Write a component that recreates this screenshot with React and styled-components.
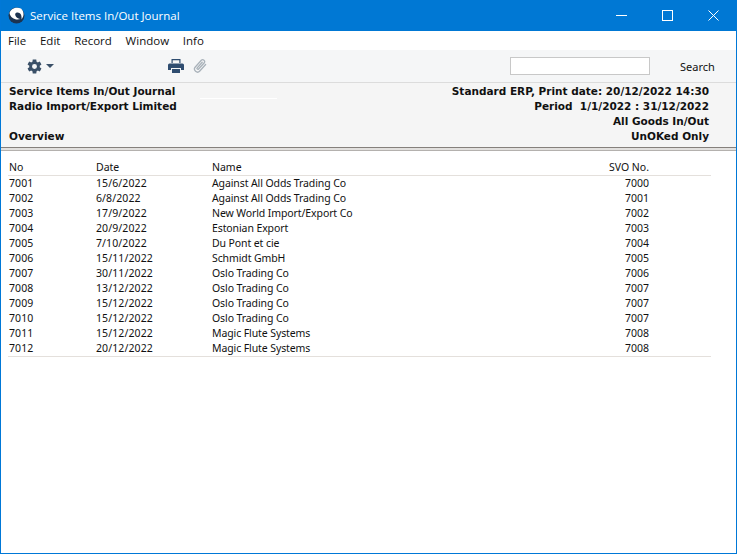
import React from 'react';
import styled, { createGlobalStyle } from 'styled-components';

const Global = createGlobalStyle`
  html, body { margin: 0; padding: 0; background: #fff; }
  #root { width: 737px; height: 554px; }
`;
const Win = styled.div`
  width: 737px; height: 554px; box-sizing: border-box;
  border: 1px solid #0078d7; border-top: 0; background: #fff;
  display: flex; flex-direction: column; overflow: hidden;
  font-family: "Noto Sans", "Open Sans", sans-serif; color: #111;
`;
const TitleBar = styled.div`
  height: 31px; flex: none; background: #0078d4; color: #fff; margin: 0 -1px;
  display: flex; align-items: center; padding: 0 1px 0 8px;
  font-family: "Open Sans", sans-serif; font-size: 11.5px;
`;
const TitleText = styled.span` margin-left: 5px; flex: 1; `;
const WinBtn = styled.div`
  width: 46px; height: 31px; display: flex; align-items: center; justify-content: center;
`;
const MenuBar = styled.div`
  height: 19px; flex: none; display: flex; align-items: center; gap: 13.75px; padding-left: 7px;
  font-family: "Open Sans", sans-serif; font-size: 11.5px;
`;
const Toolbar = styled.div`
  height: 33px; flex: none; box-sizing: border-box; background: #f5f6f7; border-bottom: 1px solid #dcdcdc;
  display: flex; align-items: center; padding-left: 25px;
`;
const Caret = styled.div`
  width: 0; height: 0; margin-left: 3px; border-left: 4px solid transparent; border-right: 4px solid transparent;
  border-top: 4px solid #3a5068;
`;
const PrintSlot = styled.div` margin-left: 114px; display: flex; gap: 9px; align-items: center; `;
const SearchInput = styled.div`
  margin-left: auto; width: 138px; height: 16px; background: #fff; border: 1px solid #c8c8c8;
`;
const SearchLabel = styled.div`
  width: 86px; box-sizing: border-box; padding-left: 30px; font-size: 11px;
`;
const ReportHead = styled.div`
  position: relative; height: 64px; flex: none; box-sizing: border-box; background: #f5f5f5; padding: 1px 27px 0 8px;
  display: flex; justify-content: space-between;
  font-family: "DejaVu Sans", sans-serif; font-weight: 700; font-size: 10.5px; line-height: 15px;
`;
const FaintMark = styled.div`
  position: absolute; left: 199px; top: 15px; width: 77px; height: 1px; background: #fff;
`;
const Col = styled.div` display: flex; flex-direction: column; align-items: ${p => p.$right ? 'flex-end' : 'flex-start'}; `;
const Line = styled.div` height: 15px; white-space: pre; `;
const Rule = styled.div`
  height: 4px; flex: none; box-sizing: border-box; background: #e2e0de;
  border-top: 1px solid #85807c; border-bottom: 1px solid #b4b1ae;
`;
const Table = styled.div`
  margin: 8px 25px 0 7px; font-size: 10.5px;
`;
const Grid = `display: grid; grid-template-columns: 87px 116px 1fr 60px 62px;`;
const HeadRow = styled.div`
  ${Grid} height: 17px; line-height: 16px; border-bottom: 1px solid #e4e0dc; padding-left: 1px; box-sizing: border-box;
`;
const Row = styled.div`
  ${Grid} height: 15px; line-height: 15px; padding-left: 1px;
`;
const Cell = styled.div` letter-spacing: 0.1px; `;
const NameCell = styled.div` letter-spacing: -0.1px; `;
const Num = styled.div` text-align: right; `;
const Bottom = styled.div` border-top: 1px solid #e4e0dc; height: 1px; `;

const rows = [
  ['7001','15/6/2022','Against All Odds Trading Co','7000'],
  ['7002','6/8/2022','Against All Odds Trading Co','7001'],
  ['7003','17/9/2022','New World Import/Export Co','7002'],
  ['7004','20/9/2022','Estonian Export','7003'],
  ['7005','7/10/2022','Du Pont et cie','7004'],
  ['7006','15/11/2022','Schmidt GmbH','7005'],
  ['7007','30/11/2022','Oslo Trading Co','7006'],
  ['7008','13/12/2022','Oslo Trading Co','7007'],
  ['7009','15/12/2022','Oslo Trading Co','7007'],
  ['7010','15/12/2022','Oslo Trading Co','7007'],
  ['7011','15/12/2022','Magic Flute Systems','7008'],
  ['7012','20/12/2022','Magic Flute Systems','7008'],
];

const Logo = () => (
  <svg width="17" height="17" viewBox="0 0 17 17">
    <circle cx="8.5" cy="8.5" r="8" fill="#1c3350" />
    <path d="M1.5 6 C3 1 9 -0.5 13 1.5 C16 4 16.5 9 13.5 12.5 C14 8 12.5 5 9 5.5 C6.5 6 6.5 9 9.5 11 C10.5 11.5 11.5 12 12.5 12 C8 13.5 2.5 11.5 1.5 6Z" fill="#fff" />
  </svg>
);
const Gear = () => (
  <svg width="17" height="17" viewBox="0 0 24 24" fill="#3a5068">
    <path fillRule="evenodd" d="M19.4 13a7.6 7.6 0 0 0 0-2l2.4-1.9-2.3-4-2.9 1.2a7.6 7.6 0 0 0-1.7-1L14.5 2h-5l-.4 3.3a7.6 7.6 0 0 0-1.7 1L4.5 5.1l-2.3 4L4.6 11a7.6 7.6 0 0 0 0 2l-2.4 1.9 2.3 4 2.9-1.2c.5.4 1.1.7 1.7 1l.4 3.3h5l.4-3.3c.6-.3 1.2-.6 1.7-1l2.9 1.2 2.3-4zM12 15.5a3.5 3.5 0 1 1 0-7 3.5 3.5 0 0 1 0 7z" />
  </svg>
);
const Printer = () => (
  <svg width="16" height="14" viewBox="0 0 16 14" fill="#2f4d70">
    <path d="M3.5 0h9v4h-1.2V1.2H4.7V4H3.5z" />
    <path d="M1.5 4.5h13A1.5 1.5 0 0 1 16 6v5h-3V9H3v2H0V6a1.5 1.5 0 0 1 1.5-1.5z" />
    <path d="M4 10h8v4H4z" />
  </svg>
);
const Clip = () => (
  <svg width="14" height="16" viewBox="0 0 14 16" fill="none" stroke="#a9b2ba" strokeWidth="1.3" strokeLinecap="round">
    <path d="M12.6 6.5 6.8 13a3 3 0 0 1-4.5-4l6-6.8a2 2 0 0 1 3 2.6L5.6 11a.9.9 0 0 1-1.4-1.2l5-5.6" />
  </svg>
);

export default function App() {
  return (
    <Win>
      <Global />
      <TitleBar>
        <Logo />
        <TitleText>Service Items In/Out Journal</TitleText>
        <WinBtn><svg width="11" height="11" viewBox="0 0 11 11"><path d="M0 5.5h11" stroke="#fff" /></svg></WinBtn>
        <WinBtn><svg width="11" height="11" viewBox="0 0 11 11"><rect x=".5" y=".5" width="10" height="10" fill="none" stroke="#fff" /></svg></WinBtn>
        <WinBtn><svg width="11" height="11" viewBox="0 0 11 11"><path d="M.5.5l10 10M10.5.5l-10 10" stroke="#fff" /></svg></WinBtn>
      </TitleBar>
      <MenuBar>
        <span>File</span><span>Edit</span><span>Record</span><span>Window</span><span>Info</span>
      </MenuBar>
      <Toolbar>
        <Gear /><Caret />
        <PrintSlot><Printer /><Clip /></PrintSlot>
        <SearchInput />
        <SearchLabel>Search</SearchLabel>
      </Toolbar>
      <ReportHead>
        <FaintMark />
        <Col>
          <Line>Service Items In/Out Journal</Line>
          <Line>Radio Import/Export Limited</Line>
          <Line> </Line>
          <Line>Overview</Line>
        </Col>
        <Col $right>
          <Line>Standard ERP, Print date: 20/12/2022 14:30</Line>
          <Line>Period  1/1/2022 : 31/12/2022</Line>
          <Line>All Goods In/Out</Line>
          <Line>UnOKed Only</Line>
        </Col>
      </ReportHead>
      <Rule />
      <Table>
        <HeadRow><div>No</div><div>Date</div><div>Name</div><Num>SVO No.</Num></HeadRow>
        {rows.map(r => (
          <Row key={r[0]}><Cell>{r[0]}</Cell><Cell>{r[1]}</Cell><NameCell>{r[2]}</NameCell><Num>{r[3]}</Num></Row>
        ))}
        <Bottom />
      </Table>
    </Win>
  );
}
